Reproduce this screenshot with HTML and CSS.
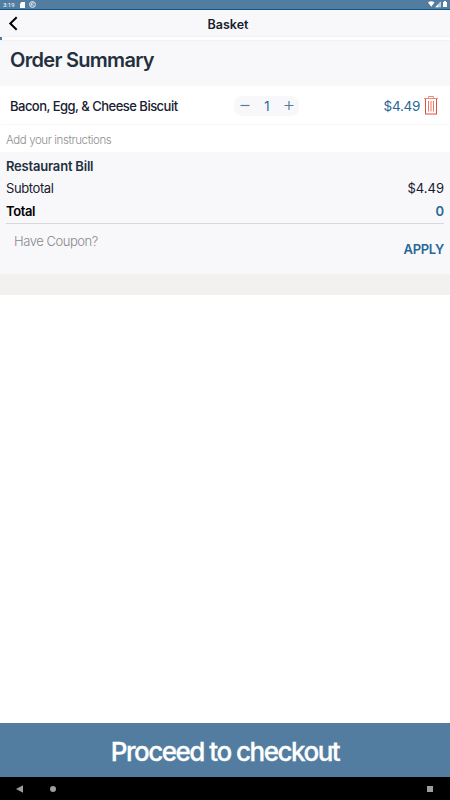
FILE: index.html
```html
<!DOCTYPE html>
<html lang="en">
<head>
    <meta charset="UTF-8">
    <meta name="viewport" content="width=device-width, initial-scale=1.0">
    <title>Basket</title>
    <link rel="stylesheet" href="styles.css">
</head>
<body>
    <div class="status-bar">
        <span class="time">3:19</span>
        <svg class="sd-icon" width="5" height="6" viewBox="0 0 5 6"><path d="M1.5 0H5V6H0V1.5Z" fill="#fff"/></svg>
        <svg class="app-icon" width="7" height="7" viewBox="0 0 7 7"><circle cx="3.5" cy="3.5" r="2.9" fill="none" stroke="#e4ecf2" stroke-width="1"/><path d="M2.2 4.8V3L3.5 1.8L4.8 3M2.6 3.2L4.8 5.2" fill="none" stroke="#fff" stroke-width=".9"/></svg>
        <svg class="signal-icons" width="20" height="7" viewBox="0 0 20 7">
            <path d="M0 1.5Q3.2-.8 6.5 1.5L3.25 5.7Z" fill="#fff"/>
            <path d="M7.3 6.3L12.5 .6V6.3Z" fill="#a9c0d2"/>
            <path d="M7.3 6.3L10.4 2.9V6.3ZM11.8 1.5L12.5 .6V6.3H11.8Z" fill="#fff"/>
            <path d="M15 1H16V0H18V1H19V6H15Z" fill="#fff"/>
        </svg>
    </div>

    <header class="header">
        <svg class="back" width="10" height="16" viewBox="0 0 10 16"><path d="M8.7 1.3L2.3 7.5L8.7 13.7" fill="none" stroke="#000" stroke-width="2"/></svg>
        <span>Basket</span>
    </header>
    <div class="progress"><div class="progress-fill"></div></div>

    <h1>Order Summary</h1>

    <div class="item">
        <span class="item-name">Bacon, Egg, &amp; Cheese Biscuit</span>
        <div class="quantity">
            <svg width="10" height="10" viewBox="0 0 10 10"><path d="M.5 4.5H9.5" stroke="#527da1" stroke-width="1.2"/></svg>
            <span>1</span>
            <svg width="10" height="10" viewBox="0 0 10 10"><path d="M.5 4.5H9.5M5 0V9" stroke="#527da1" stroke-width="1.2"/></svg>
        </div>
        <span class="item-price">$4.49</span>
        <svg class="trash" width="14" height="19" viewBox="0 0 14 19">
            <path d="M0 2.5H14M4.5 2.5V.5H9.5V2.5" fill="none" stroke="#f08a80" stroke-width="1"/>
            <path d="M1.5 3V18M12.5 3V18M1 18H13" fill="none" stroke="#e74c3c" stroke-width="1"/>
            <path d="M4.5 5V15.5M7 5V15.5M9.5 5V15.5" fill="none" stroke="#ee7468" stroke-width="1"/>
        </svg>
    </div>

    <div class="instructions">Add your instructions</div>

    <section class="bill">
        <h2>Restaurant Bill</h2>
        <div class="bill-row">
            <span class="label">Subtotal</span>
            <span class="amount">$4.49</span>
        </div>
        <div class="bill-row total">
            <span class="label">Total</span>
            <span class="total-amount">0</span>
        </div>
        <div class="coupon">
            <span class="coupon-input">Have Coupon?</span>
            <span class="apply">APPLY</span>
        </div>
    </section>
    <div class="spacer"></div>

    <div class="checkout">Proceed to checkout</div>
    <div class="nav-bar">
        <svg width="7" height="8" viewBox="0 0 7 8"><path d="M0 4L7 .3V7.7Z" fill="#9d9d9d"/></svg>
        <div class="nav-home"></div>
        <div class="nav-recent"></div>
    </div>
</body>
</html>
```
FILE: styles.css
```css
* {
    box-sizing: border-box;
}
body {
    margin: 0;
    height: 800px;
    display: flex;
    flex-direction: column;
    font-family: Inter, "Liberation Sans", sans-serif;
    color: #17202f;
    background-color: #fff;
    overflow: hidden;
}
svg {
    display: block;
    flex: none;
}
.status-bar {
    height: 10px;
    display: flex;
    align-items: center;
    padding: 0 2px 0 3px;
    background-color: #527da1;
    border-bottom: 1px solid #0c5a8a;
    color: #fff;
}
.time {
    width: 17px;
    font: 6px/9px Roboto, sans-serif;
}
.app-icon {
    margin-left: 4px;
}
.signal-icons {
    margin-left: auto;
}
.header {
    height: 27px;
    display: grid;
    grid-template-columns: 1fr auto 1fr;
    align-items: center;
    padding: 2px 2px 0 8px;
    background-color: #f8f8fb;
    border-bottom: 1px solid #f2f2f4;
    font-size: 12.5px;
    font-weight: 600;
}
.progress {
    height: 3px;
    background-color: #fff;
}
.progress-fill {
    width: 2px;
    height: 3px;
    background-color: #527da1;
}
h1 {
    height: 46px;
    margin: 0;
    padding-left: 10px;
    background-color: #f8f8fb;
    border-top: 1px solid #f2f2f4;
    color: #24303e;
    font-size: 20px;
    font-weight: 600;
    line-height: 39px;
    letter-spacing: -.7px;
}
.item {
    height: 39px;
    display: flex;
    align-items: center;
    padding: 1px 12px 0 10px;
    border-bottom: 1px solid #f8f8f9;
    border-radius: 3px;
}
.item-name {
    width: 224px;
    padding-top: 1px;
    font-size: 13px;
    font-weight: 500;
    letter-spacing: -.52px;
    white-space: nowrap;
}
.quantity {
    width: 65px;
    height: 20px;
    display: flex;
    align-items: center;
    justify-content: space-between;
    padding: 0 5px 0 6px;
    border-radius: 8px;
    background-color: #f8f8fb;
    color: #286797;
    font-size: 13px;
}
.item-price {
    margin-left: auto;
    margin-right: 4px;
    padding-top: 1px;
    color: #286797;
    font-size: 13.5px;
    letter-spacing: -.3px;
}
.instructions {
    height: 27px;
    padding-left: 6px;
    color: #8e8e8e;
    font-size: 11.5px;
    font-weight: 300;
    line-height: 30px;
    letter-spacing: -.4px;
}
.bill {
    height: 122px;
    padding: 3px 6px 0;
    background-color: #f8f8fb;
}
h2 {
    margin: 0;
    color: #24303e;
    font-size: 13px;
    font-weight: 600;
    line-height: 23px;
    letter-spacing: -.2px;
}
.bill-row {
    height: 23px;
    display: flex;
    justify-content: space-between;
    font-size: 13px;
    line-height: 20px;
}
.label {
    letter-spacing: -.4px;
}
.total {
    color: #000;
    font-weight: 600;
    border-bottom: 1px solid #d8d8dc;
}
.total-amount, .apply {
    color: #286797;
}
.coupon {
    display: flex;
    justify-content: space-between;
    font-size: 13px;
}
.coupon-input {
    padding-left: 8px;
    color: #87878c;
    font-weight: 300;
    line-height: 35px;
    letter-spacing: -.45px;
}
.apply {
    font-weight: 600;
    line-height: 51px;
    letter-spacing: -.3px;
}
.spacer {
    height: 21px;
    background-color: #f2f1ef;
}
.checkout {
    height: 54px;
    margin-top: auto;
    background-color: #527da1;
    color: #fff;
    font-size: 26px;
    font-weight: 500;
    line-height: 57px;
    letter-spacing: -1.5px;
    text-align: center;
    -webkit-text-stroke: .3px #fff;
}
.nav-bar {
    height: 23px;
    display: flex;
    align-items: center;
    padding: 0 17px 0 16px;
    background-color: #000;
}
.nav-home {
    width: 6px;
    height: 6px;
    margin-left: 27px;
    border-radius: 50%;
    background-color: #9d9d9d;
}
.nav-recent {
    width: 6px;
    height: 6px;
    margin-left: auto;
    background-color: #9d9d9d;
}
```
